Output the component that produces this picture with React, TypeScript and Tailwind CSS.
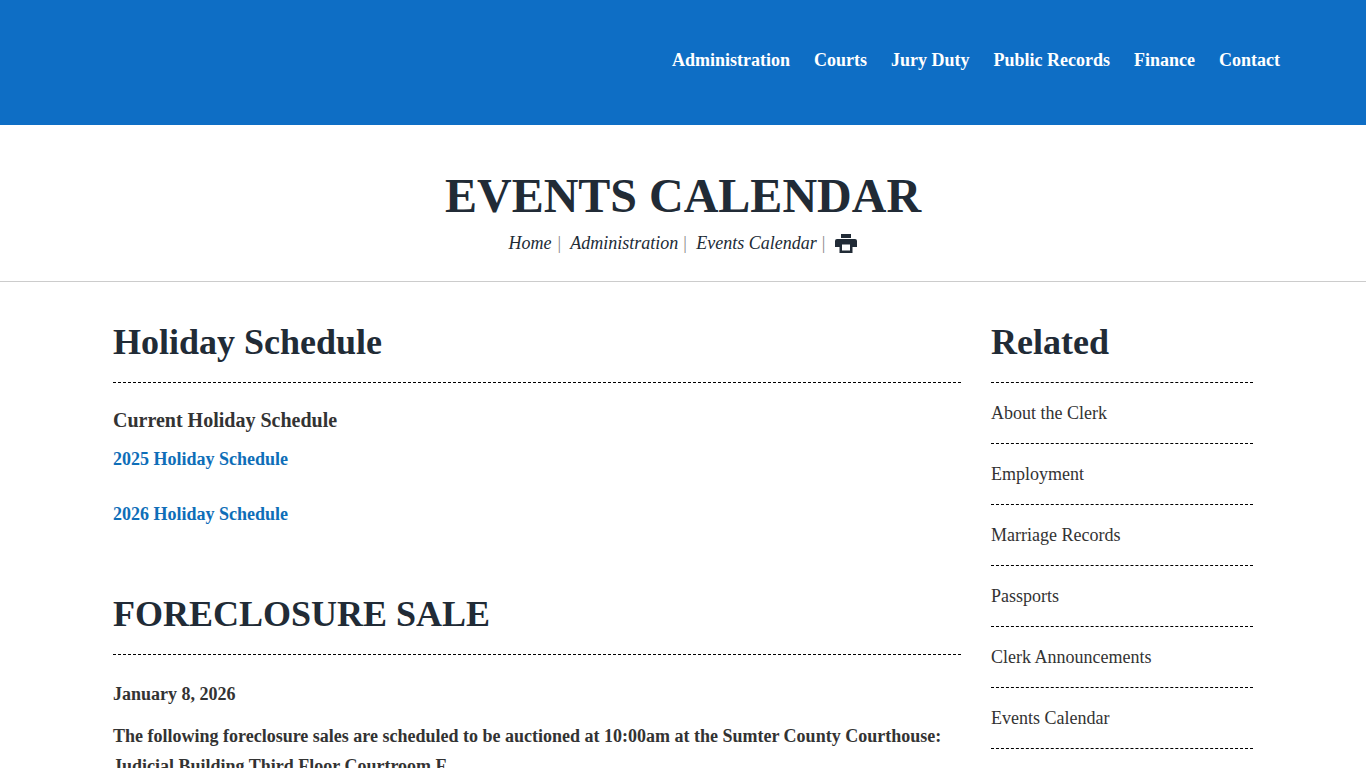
const nav = ["Administration", "Courts", "Jury Duty", "Public Records", "Finance", "Contact"];
const related = ["About the Clerk", "Employment", "Marriage Records", "Passports", "Clerk Announcements", "Events Calendar"];

function PrintIcon() {
  return (
    <svg width="22" height="19" viewBox="0 0 22 19" fill="#212b36" className="block">
      <path d="M6 0h10v4H6z" />
      <path
        d="M2 5h18a2 2 0 0 1 2 2v6h-4.500v6h-13v-6H0V7a2 2 0 0 1 2-2zM7 10.500v6h8v-6z"
        fillRule="evenodd"
      />
    </svg>
  );
}

export default function App() {
  return (
    <div className="h-[768px] overflow-hidden bg-white font-['Liberation_Serif',serif] text-[#212b36]">
      {/* Top bar */}
      <header className="flex h-[125px] items-center justify-end gap-6 bg-[#0e6ec5] pr-[86px] pb-1">
        {nav.map((item) => (
          <a key={item} className="text-[18px] font-bold text-white">
            {item}
          </a>
        ))}
      </header>

      {/* Page title */}
      <div className="h-[157px] border-b border-[#cccccc] pt-[42px] text-center">
        <h1 className="text-[48px] leading-[57px] font-bold">EVENTS CALENDAR</h1>
        <div className="mt-[6px] flex items-center justify-center text-[18px] leading-[27px] italic">
          <span>Home</span>
          <span className="mr-[9px] ml-[6px] text-[#888888] not-italic">|</span>
          <span>Administration</span>
          <span className="mr-[9.500px] ml-[5px] text-[#888888] not-italic">|</span>
          <span>Events Calendar</span>
          <span className="mr-[10px] ml-[5px] text-[#888888] not-italic">|</span>
          <PrintIcon />
        </div>
      </div>

      <div className="flex pl-[113px]">
        {/* Main column */}
        <main className="w-[848px]">
          <h2 className="mt-[39px] border-b border-dashed border-black pb-[19px] text-[36px] leading-[42px] font-bold">
            Holiday Schedule
          </h2>
          <p className="mt-[25px] text-[20px] leading-[25px] font-bold text-[#333333]">Current Holiday Schedule</p>
          <p className="mt-[13px] text-[18px] leading-[27px] font-bold text-[#0e6eb8]">2025 Holiday Schedule</p>
          <p className="mt-[28px] text-[18px] leading-[27px] font-bold text-[#0e6eb8]">2026 Holiday Schedule</p>
          <h2 className="mt-[65px] border-b border-dashed border-black pb-[19px] text-[36px] leading-[42px] font-bold">
            FORECLOSURE SALE
          </h2>
          <p className="mt-[26px] text-[18px] leading-[27px] font-bold text-[#333333]">January 8, 2026</p>
          <p className="mt-[13px] text-[18px] leading-[30px] font-bold text-[#333333]">
            The following foreclosure sales are scheduled to be auctioned at 10:00am at the Sumter County Courthouse:
            <br />
            Judicial Building Third Floor Courtroom F
          </p>
        </main>

        {/* Sidebar */}
        <aside className="ml-[30px] w-[262px]">
          <h2 className="mt-[39px] border-b border-dashed border-black pb-[19px] text-[36px] leading-[42px] font-bold">
            Related
          </h2>
          {related.map((item) => (
            <div key={item} className="flex h-[61px] items-center border-b border-dashed border-black text-[18px] text-[#333333]">
              {item}
            </div>
          ))}
        </aside>
      </div>
    </div>
  );
}
